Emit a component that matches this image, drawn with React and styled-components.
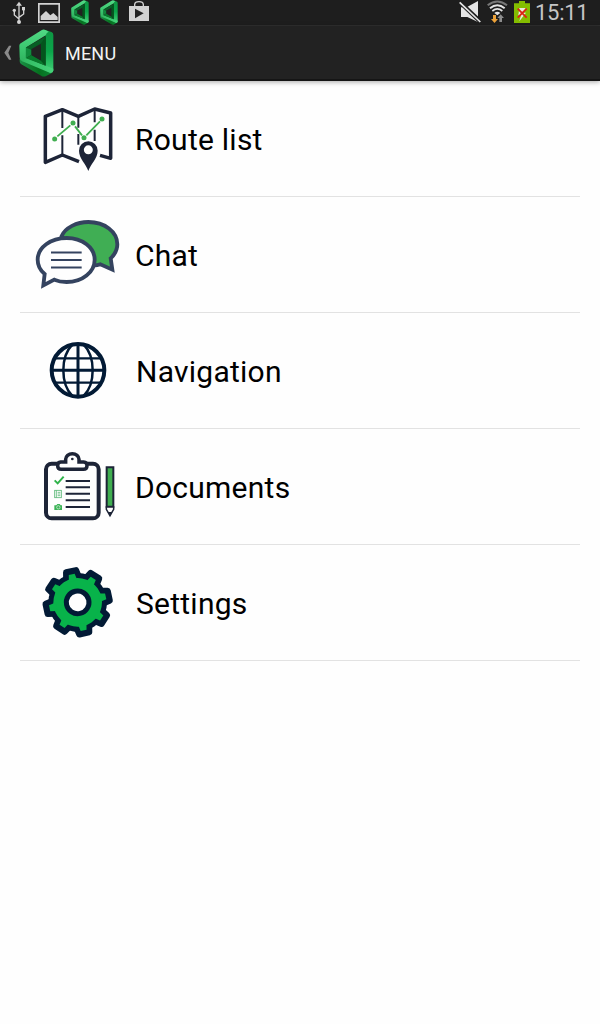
import React from 'react'
import styled, { createGlobalStyle } from 'styled-components'

const GlobalStyle = createGlobalStyle`
  body {
    margin: 0;
    background: #fefefe;
    font-family: Roboto, "Liberation Sans", sans-serif;
  }
`

const Logo = ({ width, height }) => (
  <svg width={width} height={height} viewBox="58 85 106 146" preserveAspectRatio="none">
    <defs>
      <linearGradient id="logoLeft" x1="0" y1="0" x2="0" y2="1">
        <stop offset="0" stopColor="#52d985" />
        <stop offset="0.55" stopColor="#3cc870" />
        <stop offset="1" stopColor="#2fb35f" />
      </linearGradient>
      <linearGradient id="logoRight" x1="0" y1="0" x2="0" y2="1">
        <stop offset="0" stopColor="#0f9543" />
        <stop offset="0.5" stopColor="#0aa549" />
        <stop offset="1" stopColor="#43d077" />
      </linearGradient>
      <linearGradient id="logoFoot" x1="0" y1="0" x2="1" y2="0">
        <stop offset="0" stopColor="#31ba62" />
        <stop offset="1" stopColor="#46d37a" />
      </linearGradient>
      <linearGradient id="logoBottom" x1="0" y1="0" x2="1" y2="0">
        <stop offset="0" stopColor="#1b9146" />
        <stop offset="0.6" stopColor="#05701f" />
        <stop offset="1" stopColor="#0c8434" />
      </linearGradient>
    </defs>
    <path d="M60 176L159 216Q158 219 155 220L140 228Q132 232 125 227L65 192Q60 189 60 183Z" fill="url(#logoBottom)" />
    <path d="M136 87L156 94Q162 96 162 103L162 211Q161 218 153 218L138 210L138 102Z" fill="url(#logoRight)" />
    <path d="M62 129L126 89Q132 85 138 88L148 93Q141 95 139 104L79 141V174L70 184L63 180Q60 177 60 170L59 136Q59 131 62 129Z" fill="url(#logoLeft)" />
    <path d="M79 172L139 197L162 206V211Q161 219 151 218L68 183Z" fill="url(#logoFoot)" />
    <path d="M79 141L139 107V132L96 148Z" fill="#075f25" />
    <path d="M79 141L96 148V163L79 174Z" fill="#0f8a3c" />
    <path d="M79 174L96 163L124 180L139 197Z" fill="#087a2c" />
    <path d="M124 130L139 107V197L124 181Z" fill="#03551d" />
    <path d="M96 146L124 130L124 181L96 165Z" fill="#222222" />
  </svg>
)

const UsbIcon = () => (
  <svg width="16" height="25" viewBox="33 0 48 75" fill="none" stroke="#d2d2d2" strokeWidth="4">
    <path d="M57 14V66M57 57L43 45V33M57 52L71 42V29" />
    <path d="M57 5L66 17H48Z" fill="#d2d2d2" stroke="none" />
    <circle cx="57" cy="66" r="6" fill="#d2d2d2" stroke="none" />
    <circle cx="43" cy="31" r="5" fill="#d2d2d2" stroke="none" />
    <rect x="66" y="21" width="9" height="10" fill="#d2d2d2" stroke="none" />
  </svg>
)

const PictureIcon = () => (
  <svg width="22" height="25" viewBox="114 0 66 75">
    <path d="M116.500 11.500H177.500V66.500H116.500Z" fill="none" stroke="#d2d2d2" strokeWidth="5" />
    <path d="M122 60V48L138 33L151 46L160 39L173 51V60Z" fill="#d2d2d2" />
  </svg>
)

const StoreIcon = () => (
  <svg width="20" height="25" viewBox="387 0 60 75">
    <path d="M404 19V13Q405 5 417 5Q429 5 430 13V19" fill="none" stroke="#d2d2d2" strokeWidth="4" />
    <path d="M387 18H447V63H387Z" fill="#d2d2d2" />
    <path d="M405 26L431 40L405 55Z" fill="#222" />
  </svg>
)

const MuteIcon = () => (
  <svg width="22" height="25" viewBox="27 0 66 75">
    <path d="M33 22H50L84 3V66L52 51H33Z" fill="#e6e6e6" />
    <path d="M29 6L92 66" stroke="#1e1e1e" strokeWidth="13" />
    <path d="M29 7L91 66" stroke="#e6e6e6" strokeWidth="5" />
  </svg>
)

const WifiIcon = () => (
  <svg width="21" height="25" viewBox="111 0 63 75" fill="none">
    <path d="M113 16Q142 -7 171 16" stroke="#777" strokeWidth="6" />
    <path d="M120 25Q142 7 164 25" stroke="#e3e3e3" strokeWidth="6" />
    <path d="M127 33Q142 20 157 33" stroke="#e3e3e3" strokeWidth="5" />
    <path d="M133 39Q142 31 151 39L142 46Z" fill="#e3e3e3" />
    <path d="M129 45H138V57H144L133.500 69L123 57H129Z" fill="#eda239" />
    <path d="M148 66H156V54H162L152 43L142 54H148Z" fill="#8d8d8d" />
  </svg>
)

const BatteryIcon = () => (
  <svg width="16" height="25" viewBox="192 0 48 75">
    <path d="M207 3H225V10H240V69H192V10H207Z" fill="#84bd00" />
    <path d="M208 24H227L220 38H228L208 64L213 46H205Z" fill="#e9edd9" />
    <path d="M203 26L230 53M230 26L203 53" stroke="#dc2412" strokeWidth="5.500" />
  </svg>
)

const BackIcon = () => (
  <svg width="8" height="16" viewBox="12 136 24 48">
    <path d="M27 138H34L25 159L34 180H27L13 159Z" fill="#8a8a8a" />
  </svg>
)

const MapIcon = () => (
  <MenuIcon viewBox="0 -42 300 345">
    <g fill="none" stroke="#1d2437" strokeWidth="7">
      <path d="M147 200L97 180L46 202V64L97 44L145 64L194 42L242 54V190L210 181" strokeWidth="10.500" strokeLinejoin="round" />
      <path d="M97 45V99M97 121V180M145 64V98M145 117V149M194 44V82M194 104V138" strokeWidth="6" />
    </g>
    <path d="M82 124L121 91M135 94L156 121M169 121L210 79" fill="none" stroke="#40ae50" strokeWidth="5.500" />
    <g fill="#40ae50">
      <circle cx="74" cy="132" r="7.500" />
      <circle cx="129" cy="84" r="7.500" />
      <circle cx="162" cy="128" r="7.500" />
      <circle cx="216" cy="72" r="7.500" />
    </g>
    <path d="M175 228C168 207 147 190 147 167A28 28 0 0 1 203 167C203 190 182 207 175 228ZM175 151A13.500 13.500 0 1 0 175 178A13.500 13.500 0 1 0 175 151Z" fill="#1d2437" fillRule="evenodd" />
  </MenuIcon>
)

const ChatIcon = () => (
  <MenuIcon viewBox="0 -39 300 345">
    <g stroke="#34435f" strokeWidth="11.500">
      <path d="M95 78C106 53 140 36 175 36C224 36 262 65 262 103C262 120 254 134 242 145L247 179L211 163Q199 168 180 166Z" fill="#40ae54" />
      <path d="M110 84C157 84 194 113 194 149C194 186 157 216 110 216Q89 216 73 209L40 226L44 192C31 181 23 166 23 149C23 113 62 84 110 84Z" fill="#fefefe" />
    </g>
    <path d="M63 127.500H155M63 150H155M63 172.500H155" stroke="#34435f" strokeWidth="6" />
  </MenuIcon>
)

const GlobeIcon = () => (
  <MenuIcon viewBox="0 -51 300 345">
    <g fill="none" stroke="#021a35">
      <circle cx="144" cy="121" r="79" strokeWidth="12" />
      <path d="M144 42V200M65 121H223" strokeWidth="9" />
      <path d="M76 85H212M76 158H212" strokeWidth="7" />
      <path d="M127 44C91 80 91 162 127 198M161 44C197 80 197 162 161 198" strokeWidth="7.500" />
    </g>
  </MenuIcon>
)

const DocumentsIcon = () => (
  <MenuIcon viewBox="0 -48 300 345">
    <g fill="none" stroke="#1d2437">
      <rect x="48" y="56" width="158" height="164" rx="17" strokeWidth="12" />
      <path d="M92 51H107V43A20 17 0 0 1 147 43V51H161Q171 52 171 62Q171 73 160 73H94Q83 73 83 62Q83 52 92 51Z" fill="#fefefe" strokeWidth="10.500" />
      <path d="M107 108H180M107 127H180M107 146H180M107 166H180M107 186H180" strokeWidth="6" />
    </g>
    <circle cx="127" cy="42" r="4" fill="#1d2437" />
    <path d="M74 106L83 115L101 95" fill="none" stroke="#2fb34a" strokeWidth="6" />
    <g fill="none" stroke="#5cb878" strokeWidth="2.500">
      <rect x="74" y="136" width="20" height="22" />
      <path d="M79 136V158M83 142H91M83 147H91M83 152H91" />
    </g>
    <path d="M73 181H79L82 177H89L92 181H96V195H73Z" fill="#3cb357" />
    <circle cx="85" cy="187" r="5" fill="#3cb357" stroke="#e5f5e9" strokeWidth="2" />
    <path d="M230 67H250V185H230Z" fill="#40ae50" stroke="#1d2437" strokeWidth="6" />
    <path d="M229 186H251V193L240 212L229 193Z" fill="#fefefe" stroke="#1d2437" strokeWidth="4.500" />
    <path d="M233 201H247L240 214Z" fill="#1d2437" />
  </MenuIcon>
)

const TEETH = [0, 45, 90, 135, 180, 225, 270, 315]

const GearIcon = () => (
  <MenuIcon viewBox="0 -45 300 345">
    <g transform="translate(143 127) rotate(-12)">
      <circle r="88" fill="#021a35" />
      {TEETH.map(a => (
        <path key={a} d="M-15 -95H15L19 -74H-19Z" transform={`rotate(${a})`} fill="#021a35" stroke="#021a35" strokeWidth="19" strokeLinejoin="round" />
      ))}
      <circle r="73" fill="#08b34a" />
      {TEETH.map(a => (
        <path key={a} d="M-9 -86H9L13 -65H-13Z" transform={`rotate(${a})`} fill="#08b34a" />
      ))}
      <circle r="34" fill="#fefefe" stroke="#021a35" strokeWidth="15" />
    </g>
  </MenuIcon>
)

const items = [
  { label: 'Route list', Icon: MapIcon, inset: 5 },
  { label: 'Chat', Icon: ChatIcon, inset: 5 },
  { label: 'Navigation', Icon: GlobeIcon, inset: 6 },
  { label: 'Documents', Icon: DocumentsIcon, inset: 5 },
  { label: 'Settings', Icon: GearIcon, inset: 6 },
]

const App = () => (
  <>
    <GlobalStyle />
    <StatusBar>
      <Notifications>
        <UsbIcon />
        <PictureIcon />
        <Logo width={18} height={25} />
        <Logo width={18} height={25} />
        <StoreIcon />
      </Notifications>
      <SystemIcons>
        <MuteIcon />
        <WifiIcon />
        <BatteryIcon />
        <Clock>15:11</Clock>
      </SystemIcons>
    </StatusBar>
    <ActionBar>
      <BackIcon />
      <Logo width={35} height={48} />
      <Title>MENU</Title>
    </ActionBar>
    <Menu>
      {items.map(({ label, Icon, inset }) => (
        <MenuItem key={label}>
          <Icon />
          <MenuLabel $inset={inset}>{label}</MenuLabel>
        </MenuItem>
      ))}
    </Menu>
  </>
)

export default App

const StatusBar = styled.header`
  box-sizing: border-box;
  height: 26px;
  display: flex;
  justify-content: space-between;
  padding: 0 12px 0 11px;
  background: #1e1e1e;
  border-bottom: 1px solid #303030;
`

const Notifications = styled.div`
  display: flex;
  gap: 11px;
`

const SystemIcons = styled.div`
  display: flex;
  gap: 6px;
`

const Clock = styled.span`
  width: 53px;
  margin-left: -1px;
  color: #c6c6c6;
  font-size: 22px;
  line-height: 25px;
  letter-spacing: -0.3px;
`

const ActionBar = styled.nav`
  box-sizing: border-box;
  height: 55px;
  display: flex;
  align-items: center;
  padding-left: 4px;
  background: #222;
  border-bottom: 2px solid #151515;
  box-shadow: 0 1px 5px rgba(0, 0, 0, 0.35);

  > svg + svg {
    margin-left: 7px;
  }
`

const Title = styled.h1`
  margin: 2px 0 0 11px;
  color: #f3f3f3;
  font-size: 18px;
  font-weight: 400;
  letter-spacing: 0.2px;
`

const Menu = styled.ul`
  margin: 0;
  padding: 0 20px;
  list-style: none;
`

const MenuItem = styled.li`
  height: 115px;
  display: flex;
  align-items: center;
  padding-left: 10px;
  border-bottom: 1px solid #e2e2e2;
`

const MenuIcon = styled.svg`
  width: 100px;
  height: 115px;
  flex-shrink: 0;
`

const MenuLabel = styled.span`
  margin: 2px 0 0 ${({ $inset }) => $inset}px;
  color: #000;
  font-size: 30px;
  line-height: 36px;
  letter-spacing: 0.25px;
`
